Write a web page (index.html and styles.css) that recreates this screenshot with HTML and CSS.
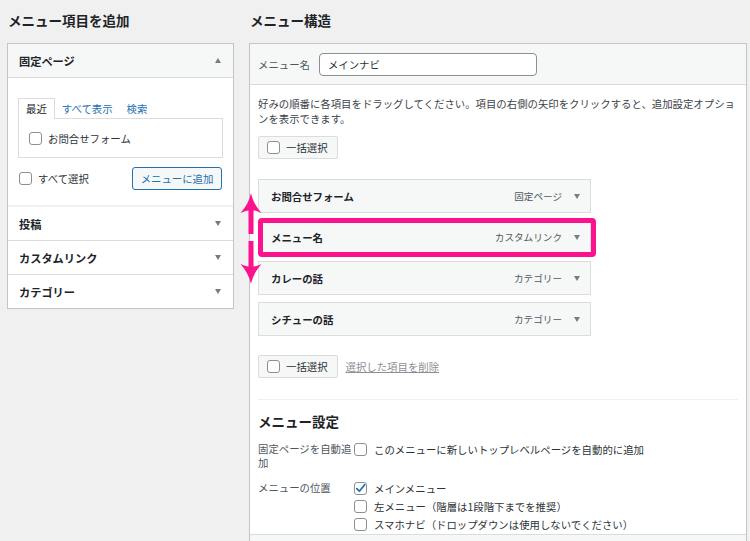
FILE: index.html
```html
<!DOCTYPE html>
<html lang="ja">
<head>
<meta charset="utf-8">
<title>メニュー</title>
<link rel="stylesheet" href="styles.css">
</head>
<body>
<div class="page">
  <section class="col-left">
    <h2 class="heading">メニュー項目を追加</h2>
    <div class="acc">
      <div class="acc-head open"><span>固定ページ</span><i class="tri-up"></i></div>
      <div class="acc-body">
        <div class="tabs">
          <span class="tab active">最近</span>
          <span class="tab">すべて表示</span>
          <span class="tab">検索</span>
        </div>
        <div class="tab-panel">
          <label class="chk"><span class="cb"></span>お問合せフォーム</label>
        </div>
        <div class="acc-actions">
          <label class="chk"><span class="cb"></span>すべて選択</label>
          <button class="btn-add" type="button">メニューに追加</button>
        </div>
      </div>
      <div class="acc-head"><span>投稿</span><i class="tri-down"></i></div>
      <div class="acc-head"><span>カスタムリンク</span><i class="tri-down"></i></div>
      <div class="acc-head last"><span>カテゴリー</span><i class="tri-down"></i></div>
    </div>
  </section>

  <section class="col-right">
    <h2 class="heading">メニュー構造</h2>
    <div class="menu-panel">
      <div class="menu-head">
        <span class="lbl">メニュー名</span>
        <input class="name-input" type="text" value="メインナビ">
      </div>
      <div class="menu-body">
        <p class="desc">好みの順番に各項目をドラッグしてください。項目の右側の矢印をクリックすると、追加設定オプションを表示できます。</p>
        <div class="bulk top"><span class="cb"></span>一括選択</div>

        <div class="items">
          <div class="item"><span class="item-title">お問合せフォーム</span><span class="item-type">固定ページ</span><i class="tri-down"></i></div>
          <div class="item"><span class="item-title">メニュー名</span><span class="item-type">カスタムリンク</span><i class="tri-down"></i><span class="hl-box"></span></div>
          <div class="item"><span class="item-title">カレーの話</span><span class="item-type">カテゴリー</span><i class="tri-down"></i></div>
          <div class="item"><span class="item-title">シチューの話</span><span class="item-type">カテゴリー</span><i class="tri-down"></i></div>
          <svg class="drag-arrows" width="22" height="94" viewBox="0 0 22 94">
            <path d="M11 1 C12.5 8 16 15 21.5 21 C18 19.5 15.5 18.5 13.5 18.5 L13.5 42 L8.5 42 L8.5 18.5 C6.5 18.5 4 19.5 0.5 21 C6 15 9.5 8 11 1 Z" fill="#fc128d"/>
            <path d="M11 92 C12.5 85 16 78 21.5 72 C18 73.5 15.5 74.5 13.5 74.5 L13.5 49 L8.5 49 L8.5 74.5 C6.5 74.5 4 73.5 0.5 72 C6 78 9.5 85 11 92 Z" fill="#fc128d"/>
          </svg>
        </div>

        <div class="bulk-row">
          <div class="bulk"><span class="cb"></span>一括選択</div>
          <span class="del-link">選択した項目を削除</span>
        </div>

        <div class="sep"></div>
        <h3 class="settings-title">メニュー設定</h3>

        <div class="set-row first">
          <div class="set-lbl">固定ページを自動追加</div>
          <div class="set-opts">
            <label class="opt"><span class="cb"></span>このメニューに新しいトップレベルページを自動的に追加</label>
          </div>
        </div>

        <div class="set-row second">
          <div class="set-lbl">メニューの位置</div>
          <div class="set-opts">
            <label class="opt"><span class="cb checked"><svg width="13" height="13" viewBox="0 0 13 13"><path d="M2.8 6.6 L5.4 9.2 L10.6 2.8" stroke="#2271b1" stroke-width="1.8" fill="none" stroke-linecap="round" stroke-linejoin="round"/></svg></span>メインメニュー</label>
            <label class="opt"><span class="cb"></span>左メニュー（階層は1段階下までを推奨）</label>
            <label class="opt"><span class="cb"></span>スマホナビ（ドロップダウンは使用しないでください）</label>
            <span class="opt"><span class="cb faded"></span></span>
          </div>
        </div>
      </div>
      <div class="menu-foot"></div>
    </div>
  </section>
</div>
</body>
</html>
```

FILE: styles.css
```css
html, body {
  margin: 0;
  padding: 0;
}

body {
  background: #f0f0f1;
  font-family: "Noto Sans CJK JP", "Noto Sans", sans-serif;
  font-size: 10.4px;
  color: #1d2327;
  height: 541px;
  overflow: hidden;
}

.page {
  display: flex;
  gap: 15px;
  padding-left: 7px;
}

.col-left {
  width: 227px;
  flex: none;
}

.col-right {
  width: 498px;
  flex: none;
}

.heading {
  margin: 0;
  padding: 11px 0 0 1px;
  height: 32px;
  line-height: 18px;
  font-size: 13.5px;
  font-weight: 700;
  color: #1d2327;
}

/* left accordion */
.acc {
  background: #fff;
  border: 1px solid #c3c4c7;
}

.acc-head {
  height: 33px;
  display: flex;
  align-items: center;
  justify-content: space-between;
  padding: 0 12px 0 11px;
  font-size: 11.2px;
  font-weight: 700;
  border-bottom: 1px solid #dcdcde;
}

.acc-head.open {
  background: #f6f7f7;
}

.acc-head.last {
  border-bottom: none;
}

.tri-up,
.tri-down {
  display: block;
  width: 0;
  height: 0;
  border-left: 3.5px solid transparent;
  border-right: 3.5px solid transparent;
  flex: none;
}

.tri-up {
  border-bottom: 5px solid #787c82;
}

.tri-down {
  border-top: 5px solid #787c82;
}

.acc-body {
  padding: 20px 10px 15px;
  border-bottom: 2px solid #f0f0f1;
}

.tabs {
  display: flex;
  height: 21px;
  margin-bottom: -1px;
  position: relative;
}

.tab {
  padding: 0 6px;
  line-height: 20px;
  color: #2271b1;
  border: 1px solid transparent;
  border-bottom: none;
}

.tab.active {
  padding: 0 7px;
  color: #1d2327;
  border-color: #dcdcde;
  background: #fff;
}

.tab-panel {
  border: 1px solid #dcdcde;
  height: 40px;
  box-sizing: border-box;
  padding: 0 10px;
  display: flex;
  align-items: center;
}

.chk {
  display: flex;
  align-items: center;
  gap: 6px;
  color: #2c3338;
}

.cb {
  display: block;
  width: 13px;
  height: 13px;
  box-sizing: border-box;
  border: 1px solid #8c8f94;
  border-radius: 3px;
  background: #fff;
  flex: none;
  position: relative;
}

.cb.faded {
  border-color: #c3c4c7;
  background: #f0f0f1;
}

.cb svg {
  position: absolute;
  left: -1px;
  top: -1px;
}

.acc-actions {
  display: flex;
  justify-content: space-between;
  align-items: center;
  margin-top: 9px;
  padding-left: 1px;
}

.btn-add {
  height: 23px;
  width: 90px;
  margin-right: 1px;
  border: 1px solid #2271b1;
  border-radius: 3px;
  background: #f6f7f7;
  color: #2271b1;
  font: inherit;
  padding: 0;
}

/* right panel */
.menu-panel {
  background: #fff;
  border: 1px solid #c3c4c7;
  border-bottom: none;
  height: 498px;
  box-sizing: border-box;
  display: flex;
  flex-direction: column;
}

.menu-head {
  height: 40px;
  flex: none;
  background: #f6f7f7;
  border-bottom: 1px solid #dcdcde;
  display: flex;
  align-items: center;
  padding-left: 8px;
  gap: 9px;
}

.lbl {
  color: #50575e;
}

.name-input {
  width: 218px;
  height: 23px;
  box-sizing: border-box;
  border: 1px solid #8c8f94;
  border-radius: 4px;
  padding: 0 8px;
  font: inherit;
  color: #2c3338;
  background: #fff;
  outline: none;
}

.menu-body {
  flex: 1;
  min-height: 0;
  overflow-x: visible;
  overflow-y: clip;
  padding: 11px 0 0 8px;
}

.desc {
  margin: 0;
  width: 480px;
  line-height: 15px;
  color: #3c434a;
}

.bulk {
  display: flex;
  width: fit-content;
  align-items: center;
  gap: 6px;
  height: 23px;
  box-sizing: border-box;
  padding: 0 9px 0 8px;
  background: #f6f7f7;
  border: 1px solid #dcdcde;
  border-radius: 2px;
  color: #2c3338;
}

.bulk.top {
  margin-top: 10px;
}

.items {
  margin-top: 20px;
  position: relative;
  width: 333px;
}

.item {
  height: 34px;
  box-sizing: border-box;
  border: 1px solid #dcdcde;
  background: #f6f7f7;
  display: flex;
  align-items: center;
  padding: 0 10px 0 12px;
  margin-bottom: 7px;
  position: relative;
}

.item-title {
  font-weight: 700;
  flex: 1;
}

.item-type {
  color: #50575e;
  font-size: 9.6px;
  margin-right: 12px;
}

.hl-box {
  position: absolute;
  left: -1px;
  top: -3px;
  width: 338px;
  height: 39px;
  box-sizing: border-box;
  border: 5px solid #fc128d;
  border-radius: 4px;
}

.drag-arrows {
  position: absolute;
  left: -18px;
  top: 13px;
}

.bulk-row {
  display: flex;
  align-items: center;
  gap: 8px;
  margin-top: 19px;
}

.del-link {
  color: #8c8f94;
  text-decoration: underline;
}

.sep {
  width: 480px;
  height: 1px;
  background: #f0f0f1;
  margin-top: 21px;
}

.settings-title {
  margin: 12px 0 0;
  font-size: 13.5px;
  line-height: 18px;
  font-weight: 700;
}

.set-row {
  display: flex;
}

.set-row.first {
  margin-top: 12px;
}

.set-row.second {
  margin-top: 9px;
}

.set-lbl {
  width: 96px;
  flex: none;
  line-height: 14px;
  color: #50575e;
}

.set-row.second .set-lbl {
  line-height: 18px;
}

.opt {
  display: flex;
  align-items: center;
  gap: 7px;
  height: 14px;
  color: #2c3338;
}

.set-row.second .opt {
  height: 18px;
}

.menu-foot {
  flex: none;
  height: 7px;
  box-sizing: border-box;
  background: #f6f7f7;
  border-top: 1px solid #dcdcde;
}
```
